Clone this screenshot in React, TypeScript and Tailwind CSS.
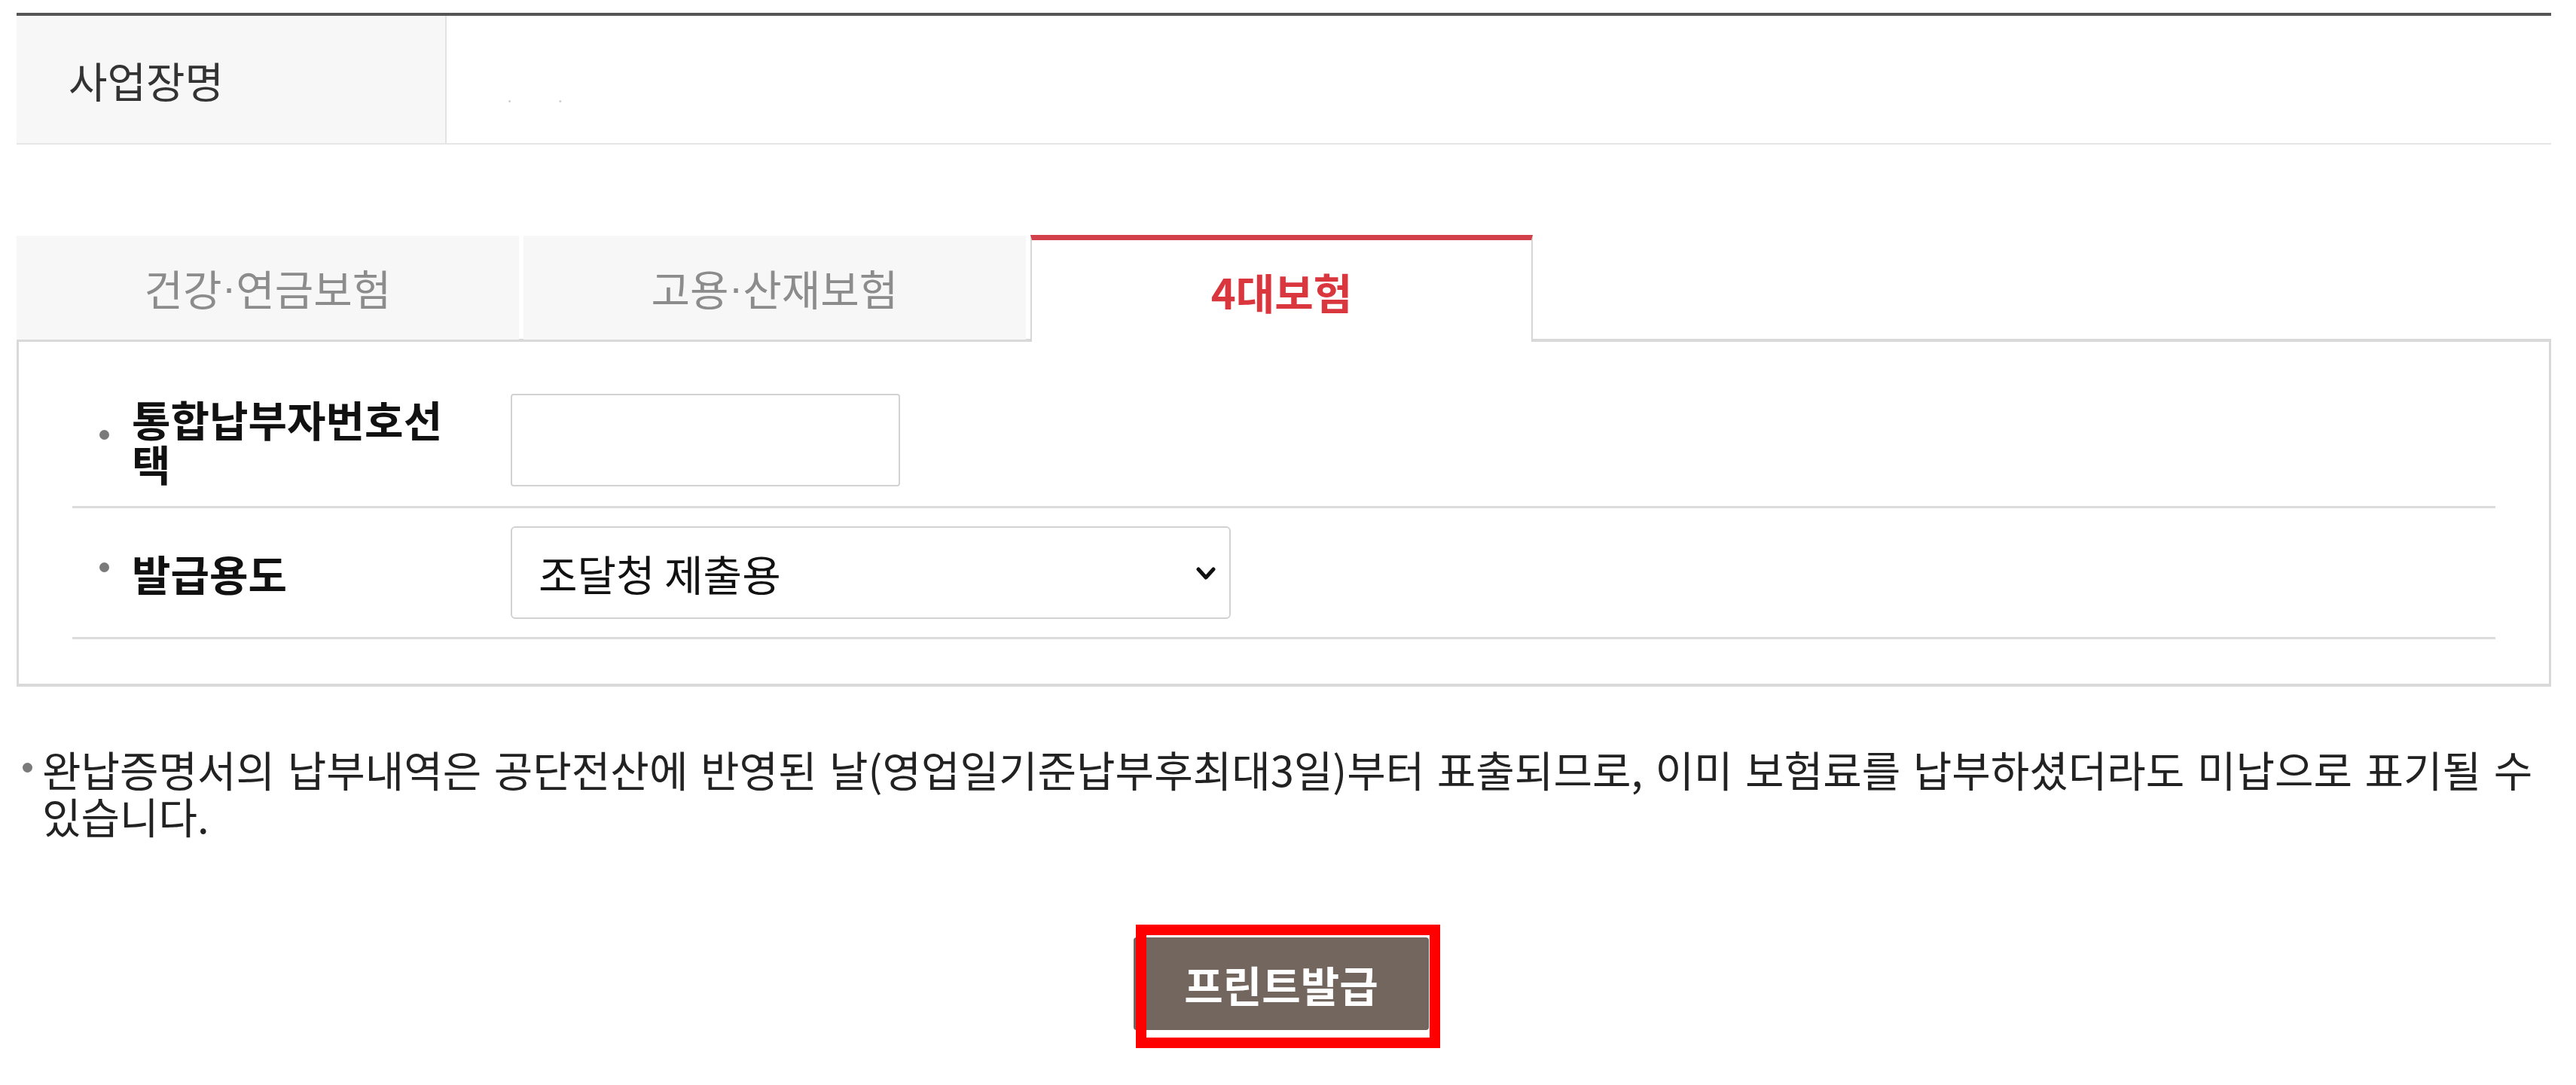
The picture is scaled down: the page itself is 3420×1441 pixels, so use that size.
const tabs = ["건강·연금보험", "고용·산재보험", "4대보험"];

function Bullet({ className = "" }: { className?: string }) {
  return <span className={`inline-block w-[13px] h-[13px] rounded-full bg-[#7a7a7a] shrink-0 ${className}`} />;
}

// 가운뎃점은 좁은 글꼴로
function TabLabel({ text }: { text: string }) {
  const parts = text.split("·");
  if (parts.length === 1) return <>{text}</>;
  return (
    <>
      {parts[0]}
      <span className="font-['Liberation_Sans',sans-serif]">·</span>
      {parts[1]}
    </>
  );
}

export default function App() {
  const active = 2;

  return (
    <div className="min-h-screen bg-white pt-[17px] pl-[22px] pr-[33px] pb-[40px] font-['Noto_Sans_CJK_KR','Noto_Sans',sans-serif] text-[#333]">
      {/* 사업장 정보 */}
      <div className="flex h-[175px] border-t-[4px] border-t-[#555] border-b-2 border-b-[#e6e6e6]">
        <div className="w-[571px] bg-[#f7f7f7] border-r-2 border-r-[#e3e3e3] flex items-center pl-[69px] text-[56px] text-[#333]">
          사업장명
        </div>
        <div className="flex-1 flex items-center pl-[78px] pt-[56px] gap-[56px] text-[#c8c8c8] text-[20px]">
          <span>·</span>
          <span>·</span>
        </div>
      </div>

      {/* 탭 */}
      <div className="mt-[120px] flex gap-[6px] h-[142px] relative z-10 -mb-[4px]">
        {tabs.map((t, i) =>
          i === active ? (
            <div
              key={t}
              className="w-[667px] h-[142px] bg-white border-t-[7px] border-t-[#d2404a] border-x-2 border-x-[#d6d6d6] flex items-center justify-center text-[56px] font-bold text-[#d9363e]"
            >
              <TabLabel text={t} />
            </div>
          ) : (
            <div
              key={t}
              className="w-[667px] h-[138px] mt-[1px] bg-[#f7f7f7] flex items-center justify-center text-[56px] text-[#8c8c8c]"
            >
              <TabLabel text={t} />
            </div>
          )
        )}
      </div>

      {/* 탭 내용 */}
      <div className="border-y-[4px] border-x-[3px] border-[#d9d9d9] pt-[43px] pb-[59px] px-[71px]">
        <div className="flex items-center py-[26px] border-b-[3px] border-b-[#dcdcdc]">
          <div className="w-[582px] flex items-center">
            <Bullet className="ml-[36px] mr-[30px] -translate-y-[7px]" />
            <div className="text-[56px] leading-[59px] font-bold text-[#111]">
              통합납부자번호선
              <br />택
            </div>
          </div>
          <div className="w-[517px] h-[123px] border-2 border-[#d2d2d2] rounded-[4px] bg-white" />
        </div>

        <div className="flex items-center py-[24px] border-b-[3px] border-b-[#dcdcdc]">
          <div className="w-[582px] flex items-center">
            <Bullet className="ml-[36px] mr-[30px] -translate-y-[7px]" />
            <div className="text-[56px] leading-[59px] font-bold text-[#111]">발급용도</div>
          </div>
          <div className="w-[956px] h-[123px] border-2 border-[#d2d2d2] rounded-[6px] bg-white flex items-center justify-between pl-[35px] pr-[17px]">
            <span className="text-[56px] text-[#111]">조달청 제출용</span>
            <svg width="28" height="20" viewBox="0 0 28 20" className="mt-[2px]">
              <path d="M4 4 L14 15 L24 4" fill="none" stroke="#111" strokeWidth="5" strokeLinecap="round" strokeLinejoin="round" />
            </svg>
          </div>
        </div>
      </div>

      {/* 안내 문구 */}
      <div className="mt-[78px] flex items-start">
        <Bullet className="ml-[8px] mr-[13px] mt-[23px]" />
        <p className="text-[56px] leading-[62px] text-[#222] [word-spacing:4px]">
          완납증명서의 납부내역은 공단전산에 반영된 날(영업일기준납부후최대3일)부터 표출되므로, 이미 보험료를 납부하셨더라도 미납으로 표기될 수
          <br />
          있습니다.
        </p>
      </div>

      {/* 버튼 */}
      <div className="mt-[131px] flex justify-center">
        <div className="relative mr-[7px]">
          <button className="w-[392px] h-[123px] rounded-[4px] bg-[#72665f] text-white text-[56px] font-bold">
            프린트발급
          </button>
          <div className="absolute top-[-17px] left-[3px] right-[-15px] bottom-[-24px] border-[14px] border-[#ff0000] pointer-events-none" />
        </div>
      </div>
    </div>
  );
}
